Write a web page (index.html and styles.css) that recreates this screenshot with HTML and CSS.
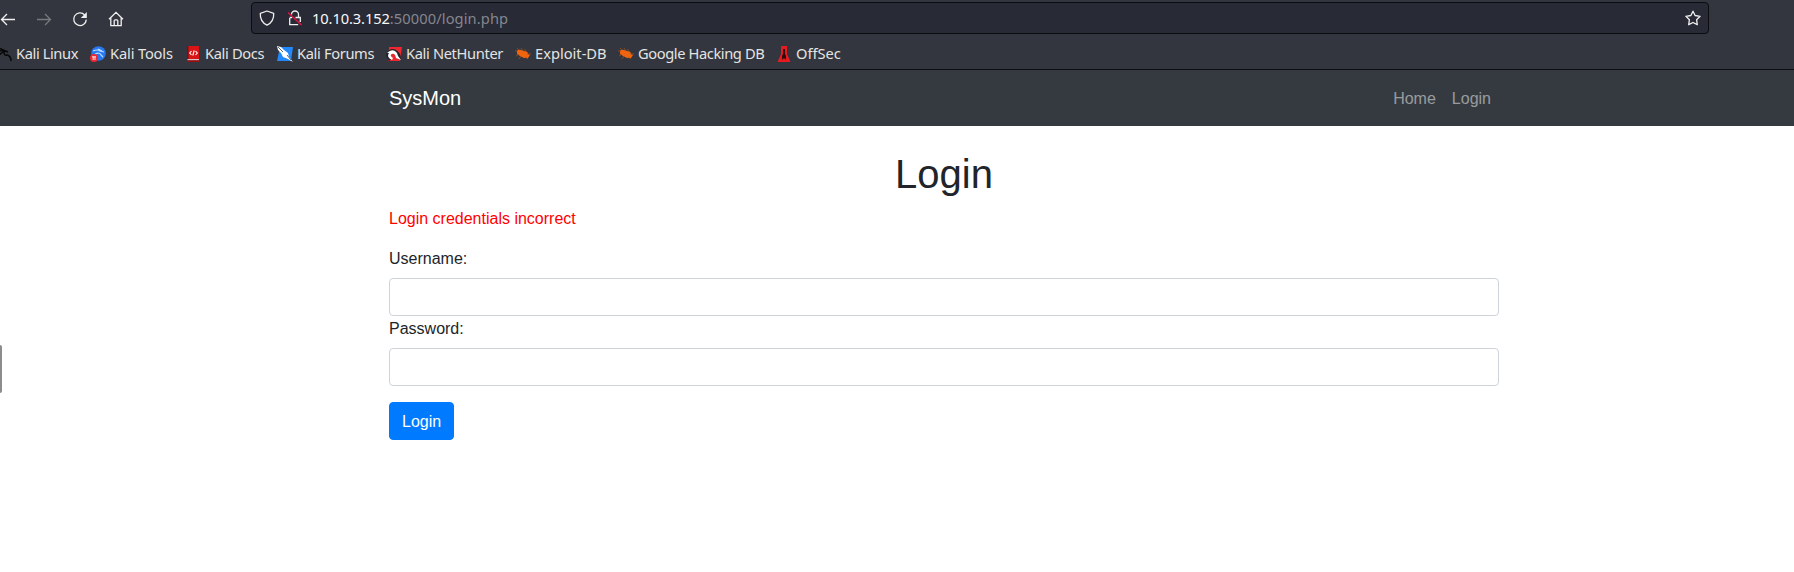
FILE: index.html
```html
<!DOCTYPE html>
<html lang="en">
<head>
<meta charset="utf-8">
<title>SysMon</title>
<link rel="stylesheet" href="styles.css">
</head>
<body>
<header class="chrome">
  <div class="toolbar">
    <div class="controls">
      <svg class="tool" viewBox="0 0 16 16"><path d="M15 8.500H1.500M7 3 1.500 8.500 7 14"/></svg>
      <svg class="tool disabled" viewBox="0 0 16 16"><path d="M1 8.500h13.500M9 3l5.500 5.500L9 14"/></svg>
      <svg class="tool" viewBox="0 0 16 16"><path d="M12.700 4A6.300 6.300 0 1 0 14.300 8.600"/><path class="solid" d="M14.800 1v6H8.800z"/></svg>
      <svg class="tool" viewBox="0 0 16 16"><path d="M1 8.300 8 1.300l7 7M2.800 7v7.700h10.400V7M6.200 14.500V9.800q0-1 1-1h1.600q1 0 1 1v4.700"/></svg>
    </div>
    <div class="urlbar">
      <svg class="tool" viewBox="0 0 16 16"><path d="M8 1 14.700 3.300C15 8.800 12.500 13 8 15.200 3.500 13 1 8.800 1.300 3.300z" stroke-linejoin="round"/></svg>
      <svg class="tool lock" viewBox="0 0 16 16"><path d="M4.500 4.500a3.500 3.500 0 0 1 7 0V7M8.500 7.500h4.800V12M2.700 8v6.700h8.500M2.700 7.500h2.500" /><path class="slash" d="M1 2.500 14.500 15"/></svg>
      <span class="address"><b>10.10.3.152</b>:50000/login.php</span>
      <svg class="tool star" viewBox="0 0 16 16"><path stroke-linejoin="round" d="m8 1.200 2.100 4.300 5 .8-3.500 3.400.7 5L8 12.500l-4.300 2.200.7-5L.9 6.300l5-.8z"/></svg>
    </div>
  </div>
  <nav class="bookmarks">
    <a class="bm bm1"><svg viewBox="0 0 16 16"><path d="M0 2q5 0 7 2l4 1.500M1 6q5-3 7 0 0 4 3 3 4 1 4 6M7 4.500l5 1.500M3 9l4-3" fill="none" stroke="#080808" stroke-width="1.500"/></svg><span>Kali Linux</span></a>
    <a class="bm bm2"><svg viewBox="0 0 16 16"><circle cx="8.500" cy="7.500" r="7.300" fill="#2878f0"/><path d="M3 5q5-2 7 0l4 1M5 8q5-2 6 1l2 2M8 3l4 2" fill="none" stroke="#b9dcff" stroke-width="1.200"/><circle cx="4" cy="12" r="4" fill="#ed2830"/><path d="M2 10.800h4M3.200 11v3M5 11v3" stroke="#fff" stroke-width=".9"/></svg><span>Kali Tools</span></a>
    <a class="bm bm3"><svg viewBox="0 0 16 16"><path fill="#d91414" d="M2 0h12v13H2z"/><path fill="#800b10" d="M2 0h1.500v13H2z"/><path fill="#d8c4c4" d="M2.500 13H14v1.500H2.500z"/><path fill="#a00c10" d="M2 14.300h12V16H2z"/><path d="M6.500 5 4.700 7l1.800 2M10.500 5l1.800 2-1.800 2M9.200 4.500 7.800 9.500" stroke="#fff" fill="none" stroke-width="1.100"/></svg><span>Kali Docs</span></a>
    <a class="bm bm4"><svg viewBox="0 0 16 16"><path fill="#2388fa" d="M3 1h13l-2 14H0z"/><path fill="#fff" d="m0 0 4 1 3 3 4 3 1 4 4 5-5-3-5-2-2-4-3-3z"/><path d="m1 1 5 5M10 9l4 5" stroke="#34444f" stroke-width=".8"/></svg><span>Kali Forums</span></a>
    <a class="bm bm5"><svg viewBox="0 0 16 16"><path fill="#ee2630" d="M3 1h13l-2 14H2z"/><path fill="#20262b" d="M0 7Q5 1 10 4q5 3 5 9l-4-1Q9 7 6 8q-3 1 0 5l-3 2-3-5z"/><path d="M1 7q4-4 8-2 3 2 3 5l3 4-5-2Q9 7 6 8q-3 1 1 4l-1 2Q0 11 3 7z" fill="#fff"/></svg><span>Kali NetHunter</span></a>
    <a class="bm bm6"><svg viewBox="0 0 16 16"><path fill="#f0640f" d="M2 5q1-2 4-1l3 1q4 0 4 3l2 1-2 3H9l-4-2-3-2z"/><path d="M0 5h3M1 10l3-2M4 13l2-3M6 2l2 3M10 3v3M12 8h4M10 11l3 2M2 2l2 2" stroke="#a8531f" stroke-width=".7"/></svg><span>Exploit-DB</span></a>
    <a class="bm bm7"><svg viewBox="0 0 16 16"><path fill="#f0640f" d="M2 5q1-2 4-1l3 1q4 0 4 3l2 1-2 3H9l-4-2-3-2z"/><path d="M0 5h3M1 10l3-2M4 13l2-3M6 2l2 3M10 3v3M12 8h4M10 11l3 2M2 2l2 2" stroke="#a8531f" stroke-width=".7"/></svg><span>Google Hacking DB</span></a>
    <a class="bm bm8"><svg viewBox="0 0 16 16"><path fill="#e51b20" d="M5 0h6v8l3.500 8h-13L5 8z"/><path fill="#330609" d="M7 3h2v5l1 2v4L8 12l-2 2v-4l1-2z"/></svg><span>OffSec</span></a>
  </nav>
</header>
<nav class="navbar">
  <div class="container nav-inner">
    <a class="brand">SysMon</a>
    <div class="links"><a>Home</a><a>Login</a></div>
  </div>
</nav>
<main class="container">
  <h1>Login</h1>
  <p class="error">Login credentials incorrect</p>
  <form>
    <label for="u">Username:</label>
    <input id="u" type="text">
    <label for="p">Password:</label>
    <input id="p" type="password">
    <button type="button">Login</button>
  </form>
</main>
<div class="edge-handle"></div>
</body>
</html>
```
FILE: styles.css
```css
* { box-sizing: border-box; }
body { margin: 0; height: 572px; overflow: hidden; background: #fff; color: #212529; font: 16px/24px "Liberation Sans", Arial, sans-serif; }
.chrome { height: 70px; background: #33363e; border-bottom: 1px solid #0d0e11; color: #e4e4e2; font-family: "Noto Sans", sans-serif; }
.toolbar { display: flex; height: 36px; padding-top: 2px; }
.controls { display: flex; align-items: center; gap: 20px; width: 251px; height: 33px; }
.tool { flex: none; width: 16px; height: 16px; fill: none; stroke: #f0f0f0; stroke-width: 1.3; }
.tool .solid { fill: #f0f0f0; stroke: none; }
.tool .slash { stroke: #e3123f; stroke-width: 1.5; }
.disabled { stroke: #77797e; }
.urlbar { display: flex; align-items: center; width: 1458px; height: 32px; padding: 0 7px 0 7px; background: #282a36; border: 1px solid #0b0c10; border-radius: 4px; }
.lock { margin-left: 12px; }
.address { margin-left: 9px; font-size: 14.67px; letter-spacing: .1px; color: #85868d; }
.address b { font-weight: 400; letter-spacing: -.1px; color: #f8f8f8; }
.star { margin-left: auto; }
.bookmarks { display: flex; height: 33px; margin-left: -4px; }
.bm { display: flex; align-items: center; gap: 4px; height: 34px; font-size: 14.67px; white-space: nowrap; }
.bm svg { flex: none; width: 16px; height: 16px; margin-top: 2px; }
.bm1 { width: 94px; letter-spacing: -.4px; }
.bm2 { width: 95px; letter-spacing: -.15px; }
.bm3 { width: 92px; letter-spacing: -.35px; }
.bm4 { width: 109px; letter-spacing: -.35px; }
.bm5 { width: 129px; letter-spacing: -.35px; }
.bm6 { width: 103px; }
.bm7 { width: 158px; letter-spacing: -.4px; }
.navbar { height: 56px; background: #343a40; }
.container { width: 1140px; margin: 0 auto; padding: 0 15px; position: relative; left: 47px; }
.nav-inner { display: flex; align-items: center; justify-content: space-between; height: 56px; }
.brand { font-size: 20px; line-height: 30px; color: #fff; }
.links { display: flex; }
.links a { padding: 9px 8px 7px; color: rgba(255, 255, 255, .5); }
h1 { margin: 24px 0 8px; font-size: 40px; line-height: 48px; font-weight: 400; text-align: center; }
.error { margin: 0; padding: 1px 0 15px; color: #f00; }
label { display: block; padding: 1px 0 7px; }
input { display: block; width: 100%; height: 38px; padding: 6px 12px; border: 1px solid #ced4da; border-radius: 4px; background: #fff; }
button { display: block; height: 38px; margin-top: 16px; padding: 7px 12px 5px; border: 1px solid #007bff; border-radius: 4px; background: #007bff; color: #fff; font: inherit; }
.edge-handle { position: absolute; left: 0; top: 345px; width: 2px; height: 48px; background: #8c8c8c; border-radius: 0 2px 2px 0; }
```
